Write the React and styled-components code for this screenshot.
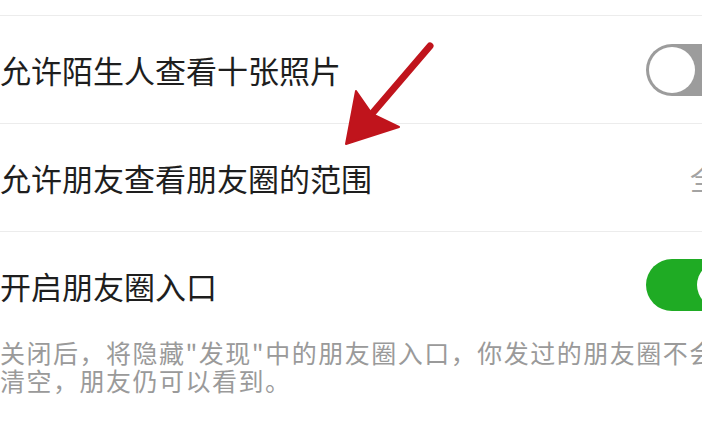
import React from 'react';
import styled, { createGlobalStyle } from 'styled-components';

const GlobalStyle = createGlobalStyle`
  html, body {
    margin: 0;
    padding: 0;
    background: #ffffff;
    overflow: hidden;
  }
  body {
    font-family: "Noto Sans CJK SC", "Noto Sans", sans-serif;
  }
`;

const Page = styled.div`
  position: relative;
  width: 746px;
  height: 427px;
  background: #ffffff;
`;

const TopGap = styled.div`
  height: 16px;
  box-sizing: border-box;
  border-bottom: 1px solid #ececec;
`;

const Row = styled.div`
  display: flex;
  align-items: center;
  justify-content: space-between;
  box-sizing: border-box;
  height: ${(p) => p.$height || 108}px;
  border-bottom: ${(p) => (p.$last ? 'none' : '1px solid #ececec')};
`;

const Title = styled.span`
  font-size: 31px;
  color: #1e1e1e;
  line-height: 1;
  white-space: nowrap;
`;

const Value = styled.span`
  font-size: 28px;
  color: #a3a3a3;
  white-space: nowrap;
`;

const Switch = styled.div`
  display: flex;
  justify-content: ${(p) => (p.$on ? 'flex-end' : 'flex-start')};
  align-items: center;
  box-sizing: border-box;
  width: 100px;
  height: 52px;
  padding: 3px;
  border-radius: 26px;
  background: ${(p) => (p.$on ? '#1fab24' : '#9c9c9c')};
`;

const Knob = styled.div`
  width: 46px;
  height: 46px;
  border-radius: 50%;
  background: #ffffff;
`;

const Note = styled.p`
  margin: 0;
  font-size: 25px;
  letter-spacing: 1.5px;
  line-height: 28px;
  color: #9a9a9a;
  white-space: pre;
`;

const ArrowMark = styled.svg`
  position: absolute;
  left: 340px;
  top: 38px;
  width: 100px;
  height: 112px;
`;

const Arrow = () => (
  <ArrowMark viewBox="340 38 100 112">
    <line x1="430" y1="46" x2="370" y2="116" stroke="#c0141c" strokeWidth="7" strokeLinecap="round" />
    <polygon points="346,144 356,91 372,114 399,127" fill="#c0141c" stroke="#c0141c" strokeWidth="2" strokeLinejoin="round" />
  </ArrowMark>
);

export default function App() {
  return (
    <>
      <GlobalStyle />
      <Page>
        <TopGap />
        <Row>
          <Title>允许陌生人查看十张照片</Title>
          <Switch>
            <Knob />
          </Switch>
        </Row>
        <Row>
          <Title>允许朋友查看朋友圈的范围</Title>
          <Value>全部</Value>
        </Row>
        <Row $last $height={106}>
          <Title>开启朋友圈入口</Title>
          <Switch $on>
            <Knob />
          </Switch>
        </Row>
        <Note>{'关闭后，将隐藏"发现"中的朋友圈入口，你发过的朋友圈不会\n清空，朋友仍可以看到。'}</Note>
        <Arrow />
      </Page>
    </>
  );
}
